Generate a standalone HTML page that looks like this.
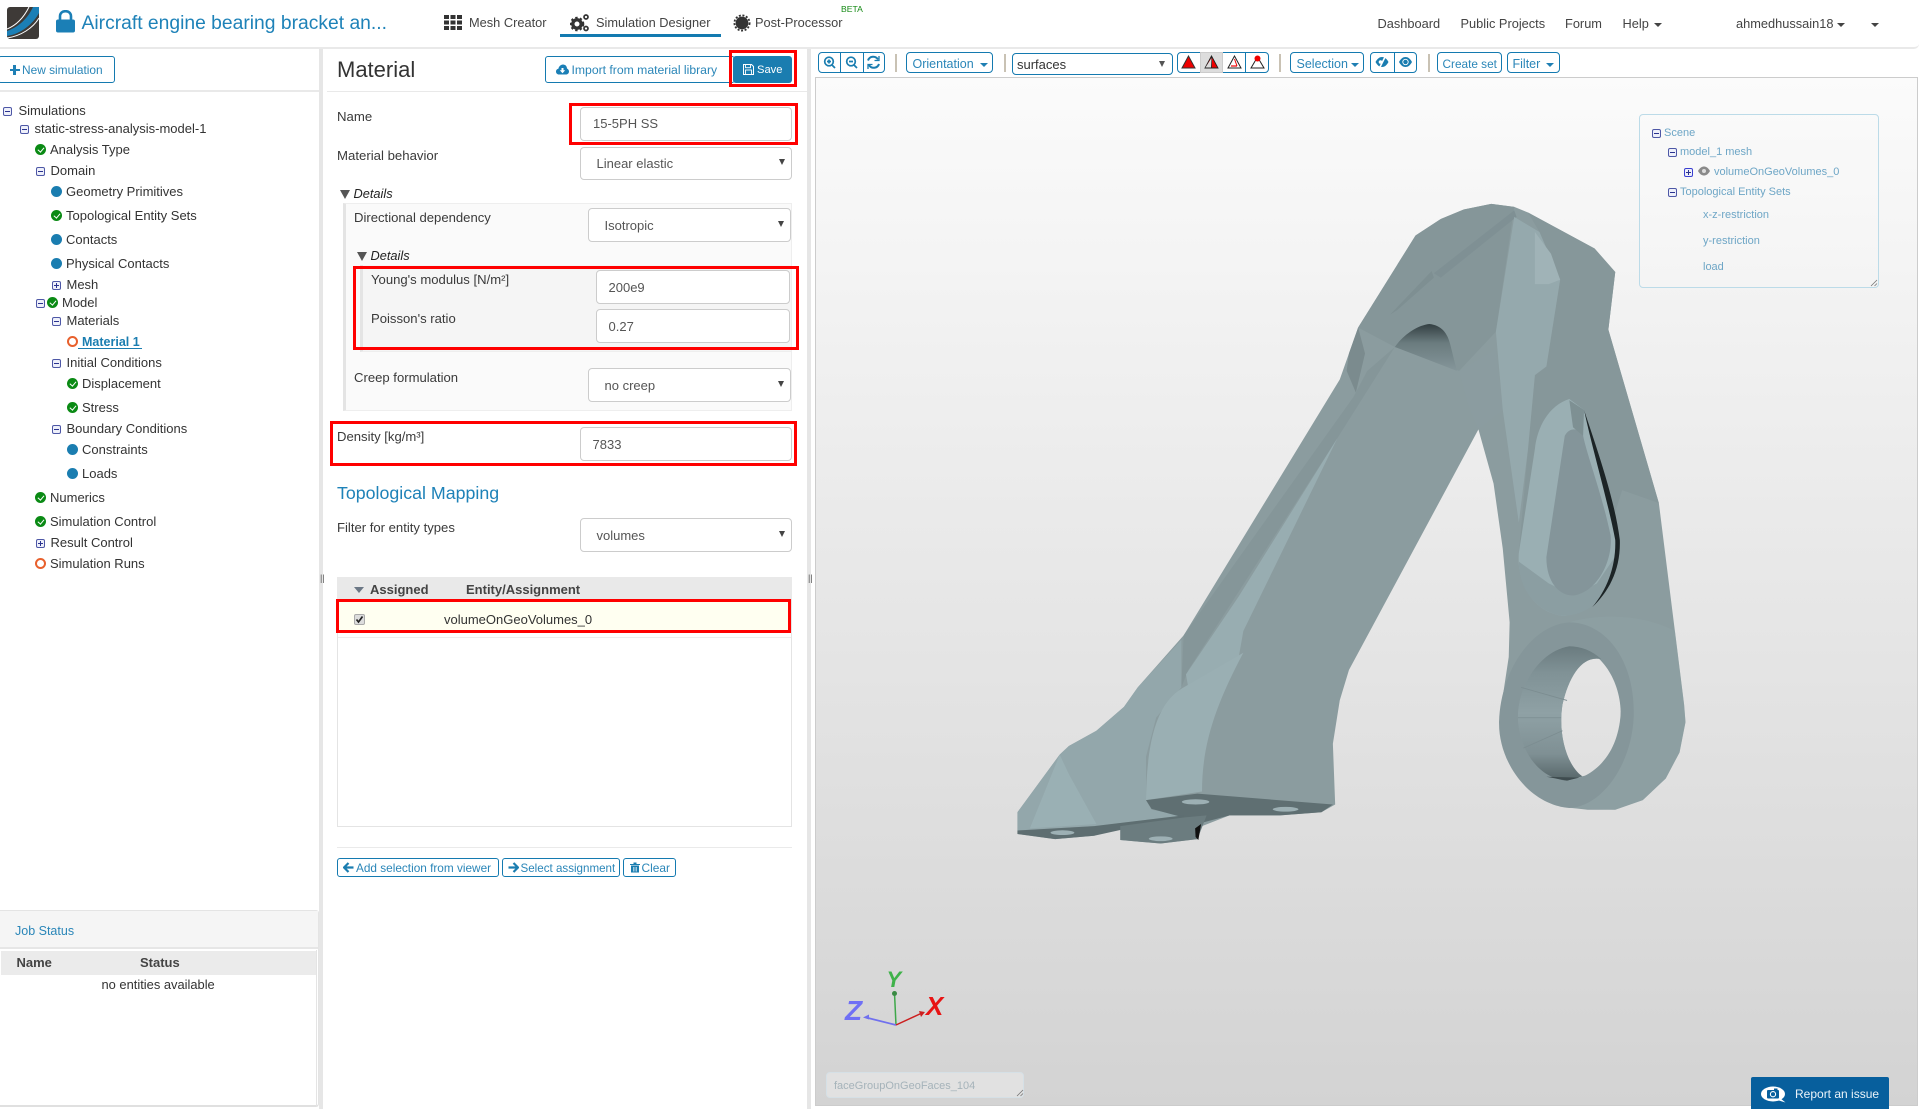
<!DOCTYPE html>
<html lang="en">
<head>
<meta charset="utf-8">
<title>Material - Simulation Designer</title>
<style>
html,body{margin:0;padding:0;background:#fff;width:1919px;height:1109px;overflow:hidden;font-family:"Liberation Sans",sans-serif;color:#333}
#p{position:relative;width:1919px;height:1109px;overflow:hidden}
.a,.t,.b,.in{position:absolute;box-sizing:border-box}
.t{white-space:nowrap;line-height:16px;font-size:13px}
.n{font-size:12.8px;color:#444}
.l{font-size:13.2px;color:#3a3a3a}
.v{font-size:13px;color:#555}
.bl{color:#1f80b5}
.in{background:#fff;border:1px solid #ccc;border-radius:4px}
.b{border:1px solid #147ab0;border-radius:3px;background:#fff}
.tt{font-size:12.5px;color:#2a86b8}
.arr{position:absolute;width:0;height:0;border-left:3.5px solid transparent;border-right:3.5px solid transparent;border-top:6px solid #444}
.car{position:absolute;width:0;height:0;border-left:4px solid transparent;border-right:4px solid transparent;border-top:4px solid #1f7fb3}
.cd{position:absolute;width:0;height:0;border-left:4px solid transparent;border-right:4px solid transparent;border-top:4px solid #444}
.tri{position:absolute;width:0;height:0;border-left:5.5px solid transparent;border-right:5.5px solid transparent;border-top:9px solid #555}
.r{position:absolute;box-sizing:border-box;border:3px solid #f00;z-index:5}
.ic{position:absolute;box-sizing:border-box;width:9px;height:9px;border:1px solid #4d57a6;border-radius:2px;background:#eef0fa}
.ic:after{content:"";position:absolute;left:1px;right:1px;top:3px;height:1px;background:#2b3390}
.ic.p:before{content:"";position:absolute;top:1px;bottom:1px;left:3px;width:1px;background:#2b3390}
.d{position:absolute;width:11px;height:11px;border-radius:50%;background:#1a7db0}
.o{position:absolute;width:11px;height:11px;border-radius:50%;box-sizing:border-box;border:2px solid #e8602c}
.c{position:absolute;width:11px;height:11px;border-radius:50%;background:#0a8a14}
.c:after{content:"";position:absolute;left:3.5px;top:1.6px;width:2.6px;height:5px;border:solid #fff;border-width:0 1.7px 1.7px 0;transform:rotate(40deg)}
.sep{position:absolute;width:2px;height:18px;top:54px;background:#c9c2b4}
.sc{color:#6ea6c6;font-size:11px}
</style>
</head>
<body>
<div id="p">

<!-- header -->
<div class="a" style="left:0;top:0;width:1919px;height:49px;background:#fff;border-bottom:2px solid #e9e9e9;border-bottom-right-radius:5px"></div>
<svg class="a" style="left:7px;top:7px" width="33" height="33" viewBox="0 0 33 33">
<rect width="32" height="32" rx="3" fill="#3e3a37"/>
<path d="M0 24C12 20 21 11 26 0H32V6C26 17 14 27 0 29Z" fill="#1b7fb6"/>
<path d="M0 22C10 18 17 10 22 0" stroke="#fff" stroke-width="1" fill="none"/>
<path d="M0 31C14 29 26 21 32 11" stroke="#fff" stroke-width="1" fill="none"/>
</svg>
<svg class="a" style="left:56px;top:10px" width="19" height="23" viewBox="0 0 19 23">
<path d="M4 10V6.500C4 3 6.300 1.200 9.500 1.200S15 3 15 6.500V10" fill="none" stroke="#1b7fb6" stroke-width="2.600"/>
<rect x="0" y="9.500" width="19" height="13" rx="2" fill="#1b7fb6"/>
</svg>
<div class="t bl" style="left:81.500px;top:15px;font-size:19.300px;line-height:18px;color:#1e82b8">Aircraft engine bearing bracket an...</div>

<svg class="a" style="left:444px;top:15px" width="18" height="15" viewBox="0 0 18 15" fill="#333">
<rect width="5" height="4"/><rect x="6.500" width="5" height="4"/><rect x="13" width="5" height="4"/>
<rect y="5.500" width="5" height="4"/><rect x="6.500" y="5.500" width="5" height="4"/><rect x="13" y="5.500" width="5" height="4"/>
<rect y="11" width="5" height="4"/><rect x="6.500" y="11" width="5" height="4"/><rect x="13" y="11" width="5" height="4"/>
</svg>
<div class="t n" style="left:469px;top:15px">Mesh Creator</div>

<svg class="a" style="left:570px;top:13px" width="20" height="19" viewBox="0 0 20 19">
<circle cx="7" cy="11" r="4.200" fill="none" stroke="#333" stroke-width="3.400"/>
<circle cx="7" cy="11" r="6.400" fill="none" stroke="#333" stroke-width="1.800" stroke-dasharray="2.400 2.300"/>
<circle cx="16" cy="4" r="2" fill="none" stroke="#333" stroke-width="1.700"/>
<circle cx="16" cy="15.500" r="2" fill="none" stroke="#333" stroke-width="1.700"/>
</svg>
<div class="t n" style="left:596px;top:15px">Simulation Designer</div>
<div class="a" style="left:560px;top:34px;width:161px;height:3px;background:#137ab0"></div>

<svg class="a" style="left:733px;top:14px" width="18" height="18" viewBox="0 0 18 18">
<circle cx="9" cy="9" r="6.400" fill="#333"/>
<circle cx="9" cy="9" r="7.600" fill="none" stroke="#333" stroke-width="1.800" stroke-dasharray="2 1.600"/>
</svg>
<div class="t n" style="left:755px;top:15px">Post-Processor</div>
<div class="t" style="left:841px;top:1px;font-size:8.600px;color:#158a15">BETA</div>

<div class="t n" style="left:1377.500px;top:16px">Dashboard</div>
<div class="t n" style="left:1460.500px;top:16px">Public Projects</div>
<div class="t n" style="left:1565px;top:16px">Forum</div>
<div class="t n" style="left:1622.500px;top:16px">Help</div>
<div class="cd" style="left:1654px;top:23px"></div>
<div class="t n" style="left:1736px;top:16px">ahmedhussain18</div>
<div class="cd" style="left:1837px;top:23px"></div>
<div class="cd" style="left:1871px;top:23px"></div>

<!-- dividers -->
<div class="a" style="left:319px;top:49px;width:4px;height:1060px;background:#e6e6e6"></div>
<div class="a" style="left:807px;top:49px;width:4px;height:1060px;background:#e6e6e6"></div>
<div class="t" style="left:320px;top:571px;font-size:9px;color:#555;line-height:14px">||</div>
<div class="t" style="left:808px;top:571px;font-size:9px;color:#555;line-height:14px">||</div>

<!-- left panel -->
<div class="b" style="left:-2px;top:56px;width:117px;height:27px"></div>
<div class="a" style="left:9.500px;top:68.500px;width:10px;height:2.400px;background:#1f80b5"></div>
<div class="a" style="left:13.300px;top:64.500px;width:2.400px;height:10px;background:#1f80b5"></div>
<div class="t tt" style="left:22px;top:62px;font-size:11.900px">New simulation</div>
<div class="a" style="left:0;top:90px;width:319px;height:2px;background:#e9e9e9"></div>

<i class="ic" style="left:3px;top:107px"></i><div class="t" style="left:18.500px;top:103px">Simulations</div>
<i class="ic" style="left:19.500px;top:125px"></i><div class="t" style="left:34.500px;top:121px">static-stress-analysis-model-1</div>
<i class="c" style="left:35px;top:144px"></i><div class="t" style="left:50px;top:142px">Analysis Type</div>
<i class="ic" style="left:35.500px;top:167px"></i><div class="t" style="left:50.500px;top:163px">Domain</div>
<i class="d" style="left:51px;top:186px"></i><div class="t" style="left:66px;top:184px">Geometry Primitives</div>
<i class="c" style="left:51px;top:210px"></i><div class="t" style="left:66px;top:208px">Topological Entity Sets</div>
<i class="d" style="left:51px;top:234px"></i><div class="t" style="left:66px;top:232px">Contacts</div>
<i class="d" style="left:51px;top:258px"></i><div class="t" style="left:66px;top:256px">Physical Contacts</div>
<i class="ic p" style="left:51.500px;top:281px"></i><div class="t" style="left:66.500px;top:277px">Mesh</div>
<i class="ic" style="left:35.500px;top:299px"></i><i class="c" style="left:47px;top:297px"></i><div class="t" style="left:62px;top:295px">Model</div>
<i class="ic" style="left:51.500px;top:317px"></i><div class="t" style="left:66.500px;top:313px">Materials</div>
<i class="o" style="left:66.500px;top:336px"></i>
<div class="a" style="left:78px;top:347.500px;width:64px;height:1px;background:#1a7db0"></div>
<div class="t" style="left:82px;top:334px;font-weight:bold;font-size:12.500px;color:#1a7db0">Material 1</div>
<i class="ic" style="left:51.500px;top:359px"></i><div class="t" style="left:66.500px;top:355px">Initial Conditions</div>
<i class="c" style="left:67px;top:378px"></i><div class="t" style="left:82px;top:376px">Displacement</div>
<i class="c" style="left:67px;top:402px"></i><div class="t" style="left:82px;top:400px">Stress</div>
<i class="ic" style="left:51.500px;top:425px"></i><div class="t" style="left:66.500px;top:421px">Boundary Conditions</div>
<i class="d" style="left:67px;top:444px"></i><div class="t" style="left:82px;top:442px">Constraints</div>
<i class="d" style="left:67px;top:468px"></i><div class="t" style="left:82px;top:466px">Loads</div>
<i class="c" style="left:35px;top:492px"></i><div class="t" style="left:50px;top:490px">Numerics</div>
<i class="c" style="left:35px;top:516px"></i><div class="t" style="left:50px;top:514px">Simulation Control</div>
<i class="ic p" style="left:35.500px;top:539px"></i><div class="t" style="left:50.500px;top:535px">Result Control</div>
<i class="o" style="left:35px;top:558px"></i><div class="t" style="left:50px;top:556px">Simulation Runs</div>

<!-- job status -->
<div class="a" style="left:0;top:910px;width:319px;height:197px;background:#fff;border:1px solid #e4e4e4;border-left:0;border-bottom:2px solid #e0e0e0;border-radius:0 3px 3px 0"></div>
<div class="a" style="left:0;top:911px;width:318px;height:38px;background:#f5f5f5;border-bottom:2px solid #e6e6e6"></div>
<div class="t" style="left:15px;top:923px;font-size:12.500px;color:#2a86b8">Job Status</div>
<div class="a" style="left:1px;top:951px;width:315px;height:24px;background:#ebebeb"></div>
<div class="a" style="left:316px;top:950px;width:1px;height:157px;background:#e4e4e4"></div>
<div class="t" style="left:16.500px;top:955px;font-weight:bold;color:#444">Name</div>
<div class="t" style="left:140px;top:955px;font-weight:bold;color:#444">Status</div>
<div class="t" style="left:101.500px;top:977px;color:#333;font-size:12.900px">no entities available</div>

<!-- material panel -->
<div class="t" style="left:337px;top:58px;font-size:22px;line-height:24px;color:#333">Material</div>
<div class="b" style="left:545px;top:56px;width:190px;height:27px"></div>
<svg class="a" style="left:556px;top:64px" width="13" height="11" viewBox="0 0 13 11"><path d="M3 10.500C1.200 10.500 0 9.200 0 7.600 0 6.100 1.100 5 2.400 4.800 2.800 2.300 4.800.5 7 .5 9.300.5 11 2.300 11 4.500 12.200 5 13 6.200 13 7.500 13 9.200 11.700 10.500 10 10.500Z" fill="#1b7fb6"/><path d="M6.500 9.200 3.800 6.300H5.500V4H7.500V6.300H9.200Z" fill="#fff"/></svg>
<div class="t tt" style="left:571.500px;top:62px;font-size:12.200px">Import from material library</div>
<div class="a" style="left:733px;top:56px;width:59px;height:27px;background:#1a7db0;border-radius:3px"></div>
<svg class="a" style="left:743px;top:64px" width="11" height="11" viewBox="0 0 11 11"><path d="M.5.500H8.500L10.500 2.500V10.500H.5Z" fill="none" stroke="#fff"/><rect x="2.500" y=".5" width="5" height="3.200" fill="none" stroke="#fff" stroke-width=".9"/><rect x="2.500" y="6" width="6" height="4.500" fill="none" stroke="#fff" stroke-width=".9"/></svg>
<div class="t" style="left:757px;top:62px;font-size:11.200px;color:#fff">Save</div>
<div class="a" style="left:327px;top:91px;width:480px;height:1px;background:#e9e9e9"></div>

<div class="t l" style="left:337px;top:109px">Name</div>
<div class="in" style="left:580px;top:107px;width:212px;height:34px"></div>
<div class="t v" style="left:593px;top:116px">15-5PH SS</div>

<div class="t l" style="left:337px;top:148px">Material behavior</div>
<div class="in" style="left:580px;top:147px;width:212px;height:33px"></div>
<div class="t v" style="left:596.500px;top:156px">Linear elastic</div>
<i class="arr" style="left:778.500px;top:159px"></i>

<i class="tri" style="left:340px;top:190px"></i>
<div class="t" style="left:353.500px;top:186px;font-style:italic;font-size:12.800px;color:#222">Details</div>

<div class="a" style="left:343px;top:203px;width:449px;height:208px;background:#fafafa;border:1px solid #eee;border-left:3px solid #e4e4e4"></div>
<div class="t l" style="left:354px;top:210px;font-size:13.100px">Directional dependency</div>
<div class="in" style="left:588px;top:208px;width:203px;height:34px"></div>
<div class="t v" style="left:604.500px;top:218px">Isotropic</div>
<i class="arr" style="left:777.500px;top:221px"></i>

<i class="tri" style="left:357px;top:252px"></i>
<div class="t" style="left:370.500px;top:248px;font-style:italic;font-size:12.800px;color:#222">Details</div>

<div class="a" style="left:360px;top:265px;width:431px;height:87px;background:#f5f5f5;border-bottom:1px solid #eee;border-left:3px solid #e4e4e4"></div>
<div class="t l" style="left:371px;top:272px;font-size:13.100px">Young's modulus [N/m²]</div>
<div class="in" style="left:596px;top:270px;width:194px;height:34px"></div>
<div class="t v" style="left:608.500px;top:280px">200e9</div>
<div class="t l" style="left:371px;top:311px;font-size:13.100px">Poisson's ratio</div>
<div class="in" style="left:596px;top:309px;width:194px;height:34px"></div>
<div class="t v" style="left:608.500px;top:319px">0.27</div>

<div class="t l" style="left:354px;top:370px;font-size:13.100px">Creep formulation</div>
<div class="in" style="left:588px;top:368px;width:203px;height:34px"></div>
<div class="t v" style="left:604.500px;top:378px">no creep</div>
<i class="arr" style="left:777.500px;top:381px"></i>

<div class="t l" style="left:337px;top:429px;font-size:13.100px">Density [kg/m³]</div>
<div class="in" style="left:580px;top:427px;width:212px;height:34px"></div>
<div class="t v" style="left:592.500px;top:437px">7833</div>

<div class="t" style="left:337px;top:483px;font-size:17.800px;line-height:20px;color:#1e82b8">Topological Mapping</div>

<div class="t l" style="left:337px;top:520px;font-size:13.100px">Filter for entity types</div>
<div class="in" style="left:580px;top:518px;width:212px;height:34px"></div>
<div class="t v" style="left:596.500px;top:528px">volumes</div>
<i class="arr" style="left:778.500px;top:531px"></i>

<div class="a" style="left:337px;top:577px;width:455px;height:250px;background:#fff;border:1px solid #e4e4e4"></div>
<div class="a" style="left:337px;top:577px;width:455px;height:22px;background:#e9e9e9"></div>
<div class="a" style="left:353.500px;top:587px;width:0;height:0;border-left:5px solid transparent;border-right:5px solid transparent;border-top:6px solid #6b7785"></div>
<div class="t" style="left:370px;top:581.500px;font-weight:bold;color:#444">Assigned</div>
<div class="t" style="left:466px;top:581.500px;font-weight:bold;color:#444">Entity/Assignment</div>
<div class="a" style="left:338px;top:599px;width:453px;height:33px;background:#fffff1"></div>
<div class="a" style="left:338px;top:637px;width:453px;height:1px;background:#ededed"></div>
<div class="a" style="left:353.500px;top:613.500px;width:11.500px;height:11.500px;background:#ddd;border:1px solid #aaa;border-radius:2px;box-sizing:border-box"></div>
<svg class="a" style="left:354px;top:614px" width="11" height="11" viewBox="0 0 11 11"><path d="M2.500 5.500 4.500 8 8.500 2.500" fill="none" stroke="#222" stroke-width="1.700"/></svg>
<div class="t" style="left:444px;top:611.500px">volumeOnGeoVolumes_0</div>

<div class="a" style="left:337px;top:847px;width:455px;height:1px;background:#eaeaea"></div>
<div class="b" style="left:337px;top:858px;width:162px;height:19px"></div>
<svg class="a" style="left:343px;top:862px" width="11" height="11" viewBox="0 0 11 11"><path d="M5.500 1 1 5.500 5.500 10M1.500 5.500H10.500" fill="none" stroke="#1a7db0" stroke-width="2.200"/></svg>
<div class="t tt" style="left:356px;top:860px;font-size:11.800px">Add selection from viewer</div>
<div class="b" style="left:502px;top:858px;width:118px;height:19px"></div>
<svg class="a" style="left:508px;top:862px" width="11" height="11" viewBox="0 0 11 11"><path d="M5.500 1 10 5.500 5.500 10M9.500 5.500H.5" fill="none" stroke="#1a7db0" stroke-width="2.200"/></svg>
<div class="t tt" style="left:520.500px;top:861px;font-size:11.600px">Select assignment</div>
<div class="b" style="left:623px;top:858px;width:53px;height:19px"></div>
<svg class="a" style="left:630px;top:862px" width="10" height="11" viewBox="0 0 10 11"><path d="M0 2H10V3H0ZM3.500 2V.5H6.500V2M1 3.500H9V10.500H1Z" fill="#1a7db0"/><path d="M3.300 5V9.500M5 5V9.500M6.700 5V9.500" stroke="#fff" stroke-width=".6"/></svg>
<div class="t tt" style="left:641.500px;top:860px;font-size:11.900px">Clear</div>

<!-- viewer -->
<div class="a" style="left:815px;top:77px;width:1103px;height:1029px;background:linear-gradient(#fbfbfb,#d3d3d3);border:1px solid #ccc"></div>

<!-- toolbar -->
<div class="b" style="left:818px;top:52px;width:67px;height:21px;border-radius:4px"></div>
<div class="a" style="left:840px;top:52px;width:1px;height:21px;background:#147ab0"></div>
<div class="a" style="left:863px;top:52px;width:1px;height:21px;background:#147ab0"></div>
<svg class="a" style="left:818px;top:52px" width="67" height="21" viewBox="0 0 67 21" fill="none" stroke="#1a7db0" stroke-width="1.700">
<circle cx="11" cy="9.500" r="4.300"/><path d="M14 13 17 16M9 9.500H13M11 7.500V11.500"/>
<circle cx="33" cy="9.500" r="4.300"/><path d="M36 13 39 16M31 9.500H35"/>
<path d="M50 8.500A5.500 5.500 0 0 1 60 7.500M61 12A5.500 5.500 0 0 1 51 13" stroke-width="2"/><path d="M61 4V8.500H56.500M50 17V12.500H54.500" stroke-width="1.300"/>
</svg>
<div class="sep" style="left:894.500px"></div>
<div class="b" style="left:906px;top:52px;width:87px;height:21px;border-radius:4px"></div>
<div class="t tt" style="left:912.500px;top:56px">Orientation</div>
<i class="car" style="left:979.500px;top:63px"></i>
<div class="sep" style="left:1004px"></div>
<div class="b" style="left:1012px;top:53px;width:161px;height:22px;border-radius:4px"></div>
<div class="t" style="left:1017px;top:57px;color:#333">surfaces</div>
<i class="arr" style="left:1159px;top:61px;border-top-color:#555"></i>
<div class="b" style="left:1176.500px;top:52px;width:92px;height:21px;border-radius:4px"></div>
<div class="a" style="left:1199.500px;top:52px;width:23px;height:21px;background:#ddd;border:1px solid #ccc;box-sizing:border-box"></div>
<div class="a" style="left:1245px;top:52px;width:1px;height:21px;background:#147ab0"></div>
<svg class="a" style="left:1176.500px;top:52px" width="92" height="21" viewBox="0 0 92 21">
<path d="M11.500 4 5 16H18Z" fill="#e00" stroke="#333" stroke-width="1"/>
<path d="M34.500 4 28 16H41ZM34.500 4V16" fill="#e00" stroke="#222" stroke-width=".9"/><path d="M34.500 6 28.500 15.500H34Z" fill="#ddd"/>
<path d="M57.500 4 51 16H64Z" fill="none" stroke="#222" stroke-width="1"/><path d="M54 14 60 14" stroke="#e00" stroke-width="1.200"/><path d="M57.500 7 60 14" stroke="#e00"/>
<path d="M80.500 5 74 16H87Z" fill="none" stroke="#222" stroke-width="1"/><circle cx="80.500" cy="6.500" r="3" fill="#e00"/>
</svg>
<div class="sep" style="left:1278.500px"></div>
<div class="b" style="left:1290px;top:52px;width:74px;height:21px;border-radius:4px"></div>
<div class="t tt" style="left:1296.500px;top:56px">Selection</div>
<i class="car" style="left:1350.500px;top:63px"></i>
<div class="b" style="left:1370px;top:52px;width:47px;height:21px;border-radius:4px"></div>
<div class="a" style="left:1393.500px;top:52px;width:1px;height:21px;background:#147ab0"></div>
<svg class="a" style="left:1370px;top:52px" width="47" height="21" viewBox="0 0 47 21">
<path d="M5.500 10C7.500 6.500 9.500 5 12 5S16.500 6.500 18.500 10C16.500 13.500 14.500 15 12 15S7.500 13.500 5.500 10Z" fill="#1a7db0"/><path d="M16 3 9 17" stroke="#fff" stroke-width="1.600"/><circle cx="10.500" cy="10" r="1.800" fill="#fff"/>
<path d="M29 10C31 6.500 33 5 35.500 5S40 6.500 42 10C40 13.500 38 15 35.500 15S31 13.500 29 10Z" fill="#1a7db0"/><circle cx="35.500" cy="10" r="2.700" fill="none" stroke="#fff" stroke-width=".9"/>
</svg>
<div class="sep" style="left:1427.500px"></div>
<div class="b" style="left:1436.500px;top:52px;width:65px;height:21px;border-radius:4px"></div>
<div class="t tt" style="left:1442.500px;top:56px;font-size:11.800px">Create set</div>
<div class="b" style="left:1506.500px;top:52px;width:53px;height:21px;border-radius:4px"></div>
<div class="t tt" style="left:1512.500px;top:56px">Filter</div>
<i class="car" style="left:1546px;top:63px"></i>

<!-- bracket -->
<svg class="a" style="left:0;top:0;pointer-events:none" width="1919" height="1109" viewBox="0 0 1919 1109">
<defs>
<linearGradient id="cy" x1="0" y1="0" x2="0" y2="1"><stop offset="0" stop-color="#6a7b7f"/><stop offset=".2" stop-color="#809296"/><stop offset=".5" stop-color="#8fa1a5"/><stop offset=".8" stop-color="#7f9094"/><stop offset="1" stop-color="#566568"/></linearGradient>
<linearGradient id="ho" x1="0" y1="0" x2="0" y2="1"><stop offset="0" stop-color="#333f42"/><stop offset=".4" stop-color="#6a7b7e"/><stop offset="1" stop-color="#85969a"/></linearGradient>
</defs>
<g transform="translate(1000,180) scale(.45914,.43367)">
<path fill-rule="evenodd" fill="#8b9c9f" d="M905 128 960 90 1010 68 1070 55 1120 62 1150 75 1295 158 1340 212 1325 345 1435 745 1490 1210 1493 1250 1480 1320 1450 1380 1400 1430 1340 1452 1280 1452 1220 1445 1170 1420 1130 1380 1100 1320 1087 1250 1098 1170 1108 1100 1110 1020 1095 850 1075 700 1042 575 760 1130 740 1200 725 1300 730 1440 700 1458 610 1465 500 1465 440 1490 430 1520 350 1530 262 1522 262 1490 205 1512 120 1520 38 1508 38 1458 130 1325 150 1305 210 1270 270 1215 300 1170 400 1050 740 460 760 400 780 340Z
M1310 1105C1270 1095 1240 1140 1225 1210 1215 1280 1235 1350 1268 1375 1310 1370 1350 1300 1352 1225 1352 1170 1335 1120 1310 1105Z"/>
<!-- darker upper and outer parts -->
<path fill="#859699" d="M905 128 960 90 1010 68 1070 55 1120 62 1080 350 1000 440 860 385 800 440 770 500 400 1050 395 1170 410 1130 735 595 860 385 780 340Z"/>
<path fill="#86979a" d="M1150 75 1295 158 1340 212 1325 345 1435 745 1355 715 1330 800 1130 860 1150 620 1165 450 1190 430 1220 230 1175 120Z"/>
<path fill="#8b9ca0" d="M1000 440 1080 390 1095 530 1042 575 1020 520Z"/>
<path fill="#7e8f92" d="M850 310 940 210 945 225 865 300Z"/>
<path fill="#7f9094" d="M945 215 1120 70 1125 85 960 225Z"/>
<path fill="#7b8b8e" d="M760 400 780 340 795 400 775 490 755 440Z"/>
<!-- light strip -->
<path fill="#95a9ad" d="M1120 85 1175 120 1220 230 1190 430 1165 450 1150 620 1130 790 1095 530 1080 350Z"/>
<path fill="#a0b3b7" d="M1165 120 1200 170 1220 230 1195 240 1165 240Z"/>
<!-- hole upper -->
<path fill="url(#ho)" d="M860 385C880 355 910 335 935 332 960 335 975 350 982 385L995 440Z"/>
<!-- left arm light strip -->
<path fill="#98adb1" d="M735 595 530 1040 520 1100 410 1170 405 1140 520 960Z"/>
<!-- fillet and foot -->
<path fill="#93a7ab" d="M38 1458 130 1325 150 1305 210 1270 270 1215 300 1170 395 1060 395 1170 340 1240 318 1330 318 1430 330 1452 400 1465 205 1490 38 1500Z"/>
<path fill="#9aafb3" d="M400 1170C350 1200 320 1270 318 1430L440 1410C440 1300 470 1210 530 1090Z"/>
<path fill="#9ab0b4" d="M130 1325 65 1495 210 1485 150 1370Z"/>
<path fill="#5f6f72" d="M318 1430 430 1415 725 1440 700 1458 610 1465 500 1465 440 1482 400 1470 330 1450Z"/>
<path fill="#5e6e71" d="M38 1500 205 1490 400 1465 400 1475 300 1490 205 1512 120 1520 38 1508Z"/>
<path fill="#6b7c7f" d="M262 1490 400 1470 450 1465 430 1520 350 1530 262 1522Z"/>
<path fill="#111" d="M425 1495 438 1485 432 1522 426 1515Z"/>
<ellipse cx="426" cy="1434" rx="30" ry="6" fill="#9db0b4"/>
<ellipse cx="622" cy="1451" rx="28" ry="5.500" fill="#9db0b4"/>
<ellipse cx="136" cy="1505" rx="26" ry="5.500" fill="#9db0b4"/>
<ellipse cx="350" cy="1519" rx="26" ry="5.500" fill="#9db0b4"/>
<!-- teardrop -->
<path fill="#9aafb3" d="M1240 505C1195 520 1170 570 1165 620L1130 860C1125 930 1160 995 1225 1005 1290 1005 1345 920 1350 830 1340 760 1290 600 1272 530Z"/>
<path fill="#8b9ea2" d="M1130 880C1130 940 1165 995 1225 1005 1290 1005 1335 950 1345 860L1300 930 1250 958 1195 930Z"/>
<path fill="#84959a" d="M1230 590 1190 870C1190 930 1220 960 1250 958 1300 950 1335 880 1330 820 1310 720 1280 640 1270 590 1260 570 1240 570 1230 590Z"/>
<path fill="#7e9093" d="M1240 508 1272 530 1270 590 1248 570Z"/>
<path fill="#1c2426" d="M1272 530C1295 605 1338 730 1350 830 1352 900 1325 950 1290 985 1322 945 1342 890 1340 830 1325 745 1290 620 1272 530Z"/>
<!-- eye ring -->
<path fill="#90a3a7" d="M1380 1230C1380 1120 1330 1025 1240 1020 1300 1000 1400 1000 1470 1040L1490 1210 1493 1250 1480 1320 1450 1380 1400 1430 1340 1452 1240 1448C1310 1445 1375 1350 1380 1240Z" opacity=".45"/>
<path fill-rule="evenodd" fill="#85969a" d="M1240 1020C1320 1020 1385 1110 1380 1240 1375 1350 1310 1445 1240 1448 1150 1440 1085 1340 1087 1250 1090 1130 1160 1025 1240 1020Z
M1240 1075C1180 1085 1128 1160 1128 1240 1130 1310 1170 1380 1235 1385 1300 1380 1352 1310 1352 1225 1350 1150 1305 1075 1240 1075Z"/>
<path fill="url(#cy)" d="M1240 1075C1180 1085 1128 1160 1128 1240 1130 1310 1170 1380 1235 1385L1268 1375C1235 1350 1215 1280 1225 1210 1240 1140 1270 1095 1310 1105 1290 1085 1265 1075 1240 1075Z"/>
<path fill="none" stroke="#7c8d91" stroke-width="2" d="M1128 1240 1222 1240M1135 1170 1235 1200M1140 1310 1225 1270"/>
<path fill="#3f4c4f" d="M1190 1376 1262 1378 1235 1385Z"/>
</g>
<!-- axes -->
<path d="M896 1025 894.500 993" stroke="#3ea84a" stroke-width="1.500" fill="none"/>
<circle cx="894.500" cy="993.500" r="2.500" fill="#3a8a44"/>
<path d="M896 1025 866 1017.500" stroke="#7070ee" stroke-width="1.800" fill="none"/>
<path d="M863 1017.500 869 1014.500 869 1019.500Z" fill="#7070ee"/>
<path d="M896 1025 922 1013" stroke="#cc1f1f" stroke-width="1.500" fill="none"/>
<path d="M925 1012 919 1011 921 1017Z" fill="#cc1f1f"/>
<text x="845" y="1020" font-family="Liberation Sans" font-style="italic" font-weight="bold" font-size="28" fill="#7070f5">Z</text>
<text x="926" y="1015" font-family="Liberation Sans" font-style="italic" font-weight="bold" font-size="26" fill="#e81414">X</text>
<text x="886.500" y="987" font-family="Liberation Sans" font-style="italic" font-weight="bold" font-size="22" fill="#3fb24a">Y</text>
</svg>

<!-- scene tree panel -->
<div class="a" style="left:1639px;top:114px;width:240px;height:174px;background:rgba(255,255,255,.12);border:1px solid #bcdbe8;border-radius:4px"></div>
<i class="ic" style="left:1652px;top:129px"></i><div class="t sc" style="left:1664px;top:125px">Scene</div>
<i class="ic" style="left:1668px;top:148px"></i><div class="t sc" style="left:1680px;top:144px">model_1 mesh</div>
<i class="ic p" style="left:1684px;top:168px;border-color:#3a3fd0"></i>
<svg class="a" style="left:1698px;top:166px" width="12" height="10" viewBox="0 0 12 10"><path d="M0 5C2 1.500 4 .5 6 .5S10 1.500 12 5C10 8.500 8 9.500 6 9.500S2 8.500 0 5Z" fill="#8a8a8a"/><circle cx="6" cy="5" r="2" fill="#ddd"/></svg>
<div class="t sc" style="left:1714px;top:164px">volumeOnGeoVolumes_0</div>
<i class="ic" style="left:1668px;top:188px"></i><div class="t sc" style="left:1680px;top:184px">Topological Entity Sets</div>
<div class="t sc" style="left:1703px;top:207px">x-z-restriction</div>
<div class="t sc" style="left:1703px;top:233px">y-restriction</div>
<div class="t sc" style="left:1703px;top:259px">load</div>
<svg class="a" style="left:1870px;top:279px" width="8" height="8" viewBox="0 0 8 8"><path d="M1 7 7 1M4.500 7 7 4.500" stroke="#777" stroke-width=".8"/></svg>

<!-- face label -->
<div class="a" style="left:826px;top:1072px;width:198px;height:26px;background:#e1e1e1;border:1px solid #d5e0e6;border-radius:4px"></div>
<div class="t" style="left:834px;top:1078px;font-size:11px;color:#a5b3ba">faceGroupOnGeoFaces_104</div>
<svg class="a" style="left:1016px;top:1089px" width="8" height="8" viewBox="0 0 8 8"><path d="M1 7 7 1M4.500 7 7 4.500" stroke="#777" stroke-width=".8"/></svg>

<!-- report -->
<div class="a" style="left:1751px;top:1077px;width:138px;height:32px;background:#075f9d;border-radius:2px 2px 0 0"></div>
<svg class="a" style="left:1761px;top:1086px" width="25" height="17" viewBox="0 0 25 17">
<ellipse cx="12" cy="8" rx="12" ry="7.500" fill="#fff"/><path d="M19 12 24.500 16.500 16 14Z" fill="#fff"/>
<rect x="6" y="4" width="12" height="8.500" rx="1" fill="#075f9d"/><rect x="13" y="2.500" width="3.500" height="2" fill="#075f9d"/><circle cx="12" cy="8.200" r="2.600" fill="none" stroke="#fff" stroke-width="1.100"/>
</svg>
<div class="t" style="left:1795px;top:1086px;font-size:12px;color:#eaf3f9">Report an issue</div>

<!-- red annotation boxes -->
<div class="r" style="left:728.500px;top:50px;width:68.500px;height:37px"></div>
<div class="r" style="left:568.500px;top:103px;width:229.500px;height:42px"></div>
<div class="r" style="left:352.500px;top:266px;width:446.500px;height:84px"></div>
<div class="r" style="left:329.500px;top:421px;width:467.500px;height:44.500px"></div>
<div class="r" style="left:335.500px;top:599px;width:455.500px;height:34px"></div>

</div>
</body>
</html>
